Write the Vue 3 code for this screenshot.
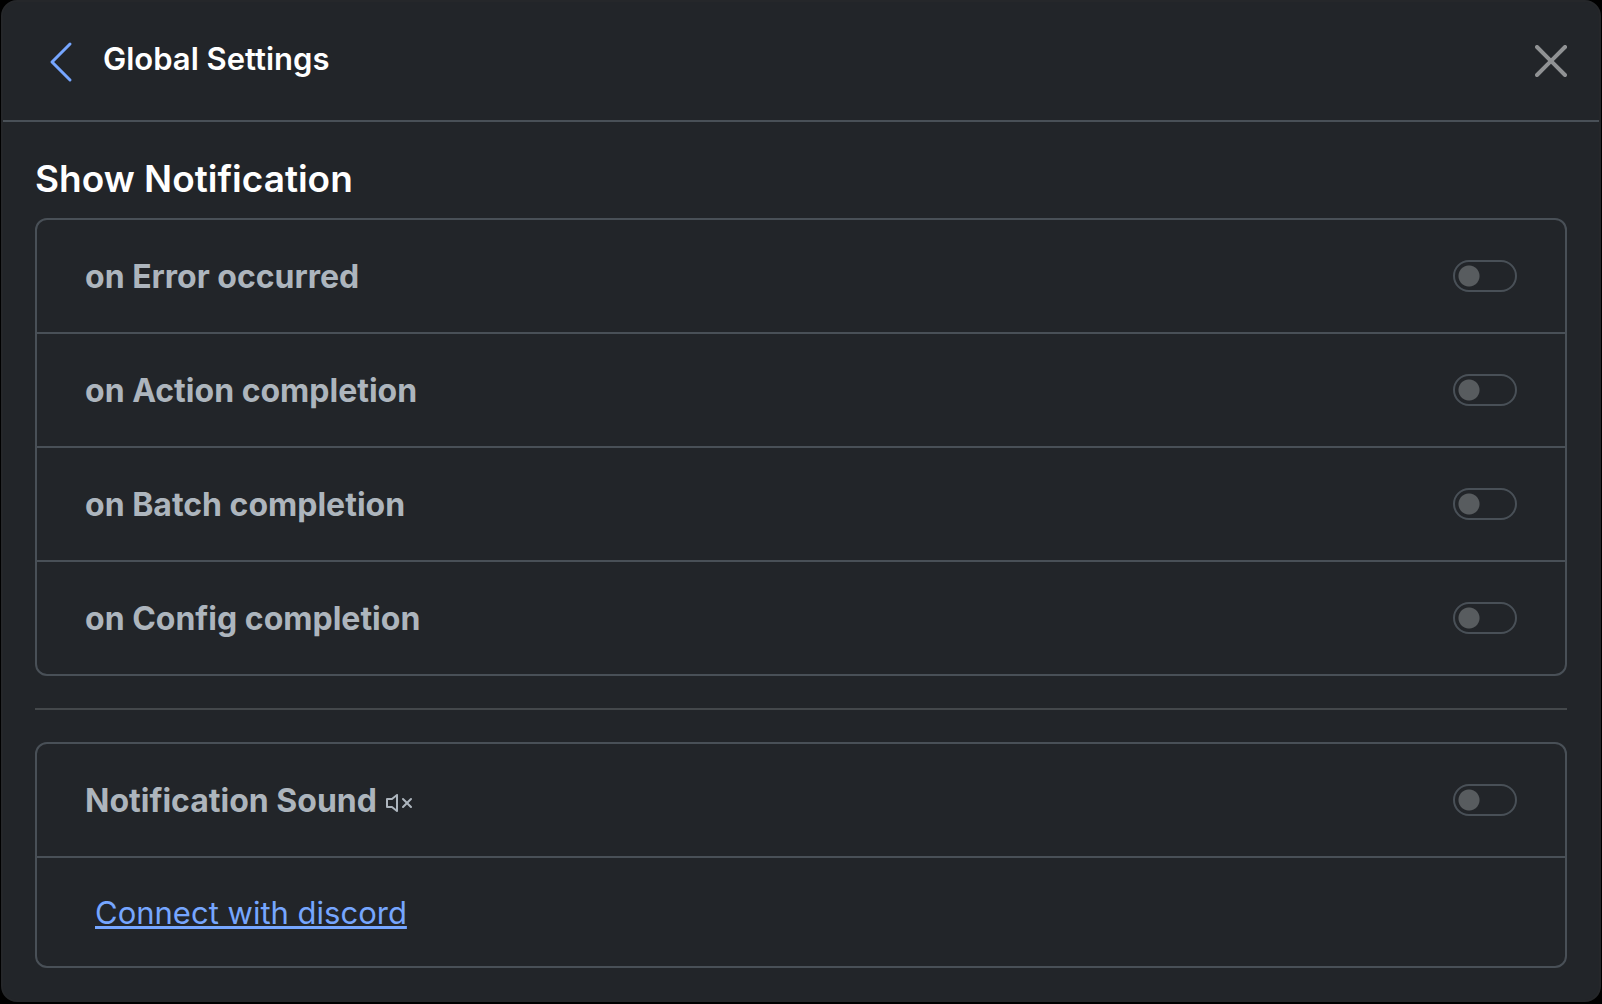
<script setup>
import { ref } from 'vue'

const events = ref([
  { id: 'error', label: 'on Error occurred', enabled: false },
  { id: 'action', label: 'on Action completion', enabled: false },
  { id: 'batch', label: 'on Batch completion', enabled: false },
  { id: 'config', label: 'on Config completion', enabled: false },
])
const sound = ref(false)
</script>

<template>
  <main class="modal">
    <header class="header">
      <button class="back" type="button" aria-label="Back">
        <svg viewBox="0 0 16 16" fill="currentColor" aria-hidden="true">
          <path d="M11.354 1.646a.5.5 0 0 1 0 .708L5.707 8l5.647 5.646a.5.5 0 0 1-.708.708l-6-6a.5.5 0 0 1 0-.708l6-6a.5.5 0 0 1 .708 0z" />
        </svg>
      </button>
      <h1 class="title">Global Settings</h1>
      <button class="close" type="button" aria-label="Close">
        <svg viewBox="0 0 16 16" fill="currentColor" aria-hidden="true">
          <path d="M.293.293a1 1 0 0 1 1.414 0L8 6.586 14.293.293a1 1 0 1 1 1.414 1.414L9.414 8l6.293 6.293a1 1 0 0 1-1.414 1.414L8 9.414l-6.293 6.293a1 1 0 0 1-1.414-1.414L6.586 8 .293 1.707a1 1 0 0 1 0-1.414z" />
        </svg>
      </button>
    </header>

    <div class="body">
      <h2 class="heading">Show Notification</h2>
      <section class="card">
        <div v-for="item in events" :key="item.id" class="row">
          <label class="label" :for="item.id">{{ item.label }}</label>
          <input :id="item.id" v-model="item.enabled" class="switch" type="checkbox" role="switch" />
        </div>
      </section>

      <hr class="rule" />

      <section class="card">
        <div class="row">
          <label class="label" for="sound">
            Notification Sound
            <svg class="mute" viewBox="0 0 16 16" fill="currentColor" aria-hidden="true">
              <path d="M6.717 3.55A.5.5 0 0 1 7 4v8a.5.5 0 0 1-.812.39L3.825 10.5H1.5A.5.5 0 0 1 1 10V6a.5.5 0 0 1 .5-.5h2.325l2.363-1.89a.5.5 0 0 1 .529-.06zM6 5.04 4.312 6.39A.5.5 0 0 1 4 6.5H2v3h2a.5.5 0 0 1 .312.11L6 10.96V5.04zm7.854.606a.5.5 0 0 1 0 .708L12.207 8l1.647 1.646a.5.5 0 0 1-.708.708L11.5 8.707l-1.646 1.647a.5.5 0 0 1-.708-.708L10.793 8 9.146 6.354a.5.5 0 1 1 .708-.708L11.5 7.293l1.646-1.647a.5.5 0 0 1 .708 0z" />
            </svg>
          </label>
          <input id="sound" v-model="sound" class="switch" type="checkbox" role="switch" />
        </div>
        <div class="row row-link">
          <a class="link" href="#">Connect with discord</a>
        </div>
      </section>
    </div>
  </main>
</template>

<style>
body {
  margin: 0;
  background: #000;
}
</style>

<style scoped>
* {
  box-sizing: border-box;
}
.modal {
  margin: 0 1px;
  border: 2px solid #25272a;
  border-radius: 16px;
  background: #222529;
  color: #fff;
  font-family: Inter, "Liberation Sans", sans-serif;
  font-size: 32px;
  line-height: 48px;
}
.header {
  display: flex;
  align-items: center;
  height: 120px;
  padding: 0 32px 0 34px;
  border-bottom: 2px solid #495057;
}
.back,
.close {
  display: block;
  padding: 0;
  border: 0;
  background: none;
  cursor: pointer;
}
.back {
  width: 48px;
  padding-top: 2px;
  color: #76a6ff;
}
.close {
  width: 32px;
  margin-left: auto;
  color: #909294;
}
.back svg,
.close svg {
  display: block;
  width: 100%;
}
.title {
  margin: 0 0 0 18px;
  padding-bottom: 4px;
  font-size: 31px;
  font-weight: 600;
}
.body {
  padding: 32px;
}
.heading {
  margin: 0 0 14px;
  font-size: 37px;
  font-weight: 600;
  line-height: 50px;
}
.card {
  border: 2px solid #495057;
  border-radius: 12px;
}
.row {
  display: flex;
  align-items: center;
  justify-content: space-between;
  height: 112px;
  padding: 0 48px;
}
.row + .row {
  height: 114px;
  border-top: 2px solid #495057;
}
.row + .row-link {
  height: 110px;
  padding: 0 58px;
}
.label,
.link {
  padding-top: 2px;
}
.label {
  color: #adb5bd;
  font-weight: 700;
}
.mute {
  width: 32px;
  height: 32px;
  vertical-align: middle;
}
.switch {
  appearance: none;
  width: 64px;
  height: 32px;
  margin: 0;
  border: 2px solid #495057;
  border-radius: 16px;
  background: radial-gradient(circle at 14px 14px, #585c5f 10px, transparent 11px);
  cursor: pointer;
}
.switch:checked {
  background: radial-gradient(circle at 46px 14px, #fff 10px, #0d6efd 11px);
}
.rule {
  height: 2px;
  margin: 32px 0;
  border: 0;
  background: #44484b;
}
.link {
  color: #76a6ff;
  font-size: 31px;
  text-decoration-thickness: 3px;
}
</style>
